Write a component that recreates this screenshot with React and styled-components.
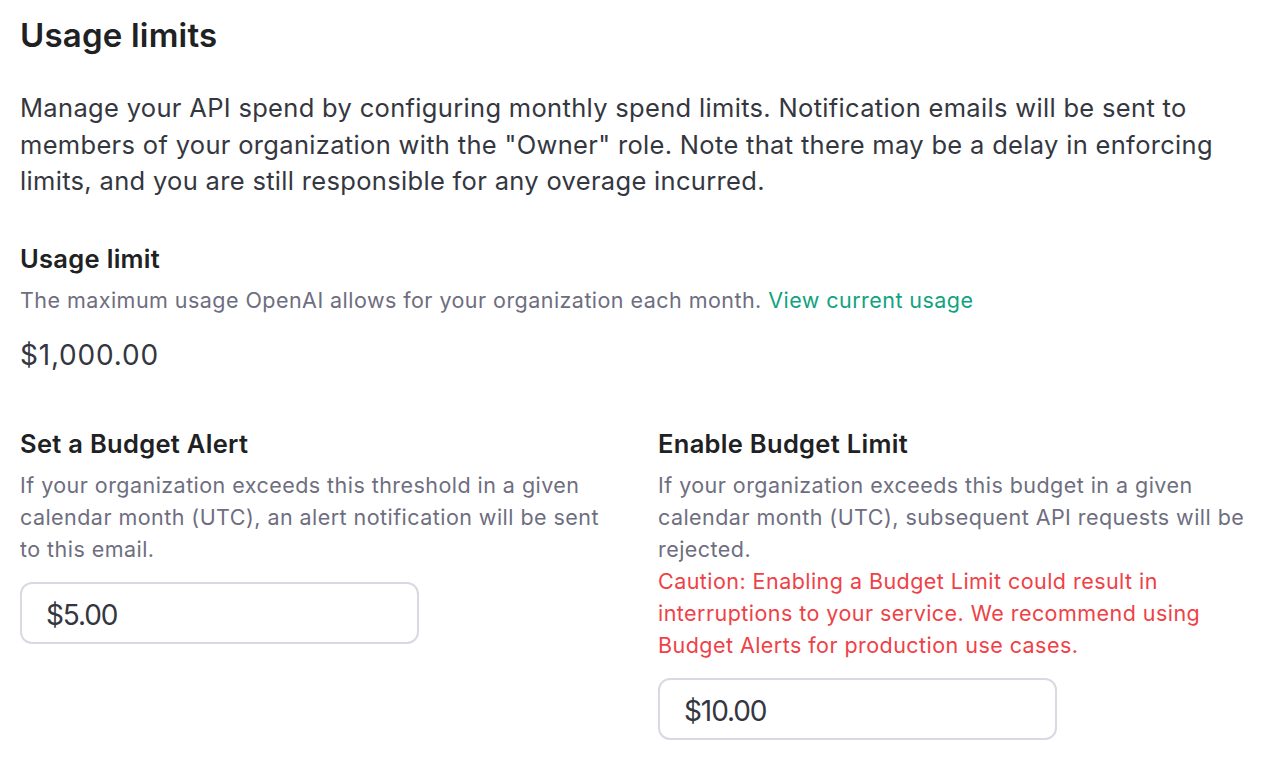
import React from 'react'
import styled, { createGlobalStyle } from 'styled-components'

const GlobalStyle = createGlobalStyle`
  body {
    margin: 0;
    background: #ffffff;
    font-family: Inter, "Liberation Sans", sans-serif;
    color: #202123;
  }
`

function App() {
  return (
    <Page>
      <GlobalStyle />
      <Title>Usage limits</Title>
      <Intro>
        Manage your API spend by configuring monthly spend limits. Notification emails will be sent to
        members of your organization with the "Owner" role. Note that there may be a delay in enforcing
        limits, and you are still responsible for any overage incurred.
      </Intro>

      <SectionTitle>Usage limit</SectionTitle>
      <Hint>
        The maximum usage OpenAI allows for your organization each month.{' '}
        <GreenLink href="#">View current usage</GreenLink>
      </Hint>
      <Amount>$1,000.00</Amount>

      <Columns>
        <Column>
          <SectionTitle>Set a Budget Alert</SectionTitle>
          <Hint>
            If your organization exceeds this threshold in a given calendar month (UTC), an alert
            notification will be sent to this email.
          </Hint>
          <MoneyInput defaultValue="$5.00" />
        </Column>
        <Column>
          <SectionTitle>Enable Budget Limit</SectionTitle>
          <Hint>
            If your organization exceeds this budget in a given calendar month (UTC), subsequent API
            requests will be rejected.
          </Hint>
          <Hint $tone="danger" $flush>
            Caution: Enabling a Budget Limit could result in interruptions to your service. We recommend
            using Budget Alerts for production use cases.
          </Hint>
          <MoneyInput defaultValue="$10.00" />
        </Column>
      </Columns>
    </Page>
  )
}

export default App

const Page = styled.div`
  padding: 15px 20px 0 20px;
  height: 760px;
  box-sizing: border-box;
  overflow: hidden;
`

const Title = styled.h1`
  margin: 0;
  font-size: 33px;
  line-height: 40px;
  font-weight: 600;
  letter-spacing: 0.2px;
`

const Intro = styled.p`
  margin: 35px 0 0 0;
  max-width: 1228px;
  font-size: 25.5px;
  line-height: 36.5px;
  font-weight: 400;
  letter-spacing: 0.32px;
  color: #353740;
`

const SectionTitle = styled.h2`
  margin: 43px 0 0 0;
  font-size: 25.5px;
  line-height: 32px;
  font-weight: 600;
  letter-spacing: 0.3px;
  color: #202123;
`

const Hint = styled.p`
  margin: ${p => (p.$flush ? '0' : '9px')} 0 0 0;
  font-size: 21.5px;
  line-height: 32px;
  letter-spacing: 0.45px;
  color: ${p => (p.$tone === 'danger' ? '#ef4146' : '#6e6e80')};
`

const GreenLink = styled.a`
  color: #10a37f;
  text-decoration: none;
`

const Amount = styled.div`
  margin-top: 21px;
  font-size: 28px;
  line-height: 36px;
  letter-spacing: 0.8px;
  color: #353740;
`

const Columns = styled.div`
  display: grid;
  grid-template-columns: 596px 596px;
  column-gap: 42px;
  margin-top: 12px;
`

const Column = styled.div`
  display: flex;
  flex-direction: column;
  align-items: flex-start;
`

const MoneyInput = styled.input`
  margin-top: 17px;
  width: 399px;
  height: 62px;
  box-sizing: border-box;
  border: 2px solid #d9d9e3;
  border-radius: 12px;
  padding: 4px 24px 0 24px;
  font-family: inherit;
  font-size: 28px;
  letter-spacing: -1.1px;
  color: #353740;
  background: #ffffff;
  outline: none;
`
